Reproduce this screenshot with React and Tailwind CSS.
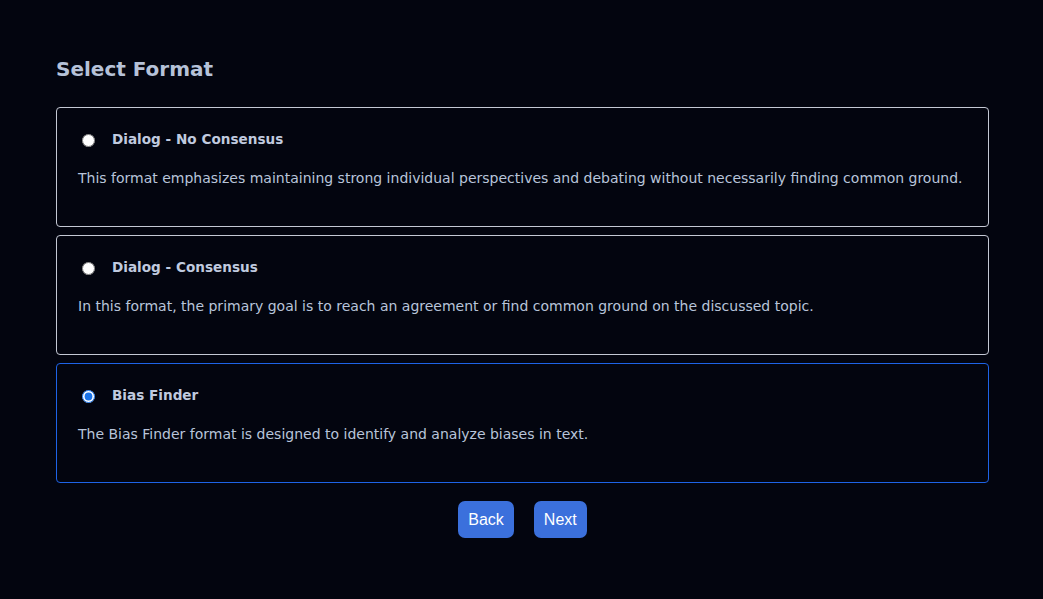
import React, { useState } from 'react';

const FORMATS = [
  {
    id: 'no-consensus',
    title: 'Dialog - No Consensus',
    description:
      'This format emphasizes maintaining strong individual perspectives and debating without necessarily finding common ground.',
  },
  {
    id: 'consensus',
    title: 'Dialog - Consensus',
    description:
      'In this format, the primary goal is to reach an agreement or find common ground on the discussed topic.',
  },
  {
    id: 'bias-finder',
    title: 'Bias Finder',
    description: 'The Bias Finder format is designed to identify and analyze biases in text.',
  },
];

const App = () => {
  const [selected, setSelected] = useState('bias-finder');

  return (
    <div className="min-h-[599px] w-full bg-[#03050f] font-['DejaVu_Sans',sans-serif] text-[#b8c4da]">
      <div className="ml-[56px] w-[933px] pt-[56px]">
        <h2 className="text-[20px] font-bold leading-[26px] text-[#b6c2d8]">Select Format</h2>

        <div className="mt-[25px] flex flex-col gap-[8px]">
          {FORMATS.map((format) => {
            const active = selected === format.id;
            return (
              <label
                key={format.id}
                className={`flex h-[120px] cursor-pointer flex-col rounded-[4px] border px-[21px] pt-[20px] ${
                  active ? 'border-[#1e63e6]' : 'border-[#c4c8d4]'
                }`}
              >
                <div className="flex h-[22px] items-center">
                  <input
                    type="radio"
                    name="format"
                    checked={active}
                    onChange={() => setSelected(format.id)}
                    className="ml-[4px] mt-[2px] h-[13px] w-[13px] accent-[#1a73e8]"
                  />
                  <span className="ml-[17px] mt-[1px] text-[13.6px] font-bold text-[#c0cadf]">
                    {format.title}
                  </span>
                </div>
                <p className="mt-[18px] text-[14px] leading-[21px] text-[#b8c4da]">
                  {format.description}
                </p>
              </label>
            );
          })}
        </div>

        <div className="mt-[18px] flex justify-center gap-[20px]">
          <button
            type="button"
            className="h-[37px] rounded-[7px] bg-[#3b70dc] px-[10px] font-['Liberation_Sans',Arial,sans-serif] text-[16px] text-white"
          >
            Back
          </button>
          <button
            type="button"
            className="h-[37px] rounded-[7px] bg-[#3b70dc] px-[10px] font-['Liberation_Sans',Arial,sans-serif] text-[16px] text-white"
          >
            Next
          </button>
        </div>
      </div>
    </div>
  );
};

export default App;
